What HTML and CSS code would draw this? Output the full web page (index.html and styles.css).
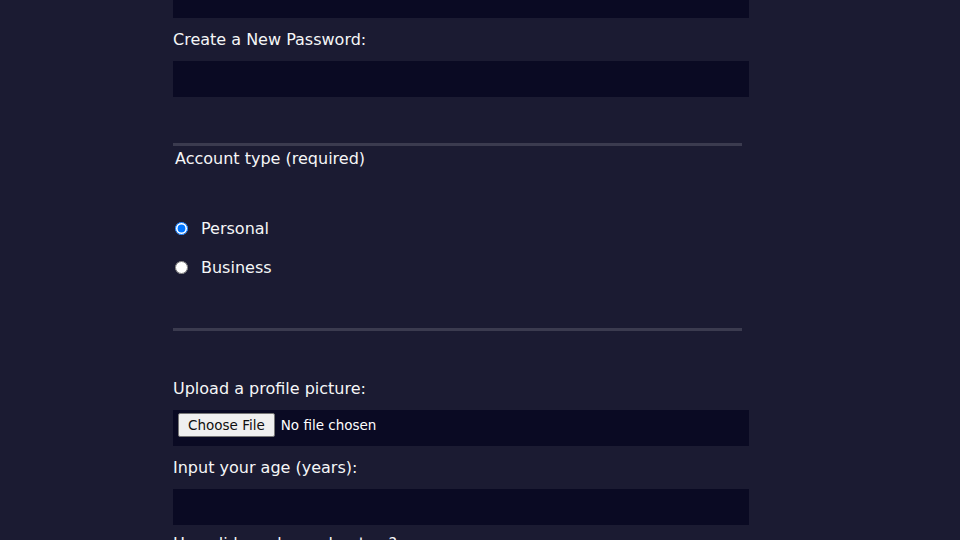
FILE: index.html
```html
<!DOCTYPE html>
<html lang="en">
<head>
<meta charset="utf-8">
<title>Registration Form</title>
<link rel="stylesheet" href="styles.css">
</head>
<body>
<form class="form" action="#">
  <fieldset class="group group-account">
    <label class="field"><span class="field-label">Enter Your Email:</span><input class="text-input" type="email" name="email"></label>
    <label class="field"><span class="field-label">Create a New Password:</span><input class="text-input" type="password" name="password"></label>
  </fieldset>
  <fieldset class="group group-type">
    <legend class="group-legend">Account type (required)</legend>
    <div class="choices">
      <label class="choice"><input class="choice-input" type="radio" name="account-type" value="personal" checked><span>Personal</span></label>
      <label class="choice"><input class="choice-input" type="radio" name="account-type" value="business"><span>Business</span></label>
    </div>
  </fieldset>
  <fieldset class="group group-profile">
    <label class="field"><span class="field-label">Upload a profile picture:</span><input class="file-input" type="file" name="file"></label>
    <label class="field"><span class="field-label">Input your age (years):</span><input class="text-input" type="number" name="age" min="13" max="120"></label>
    <label class="field field-referrer"><span class="field-label">How did you hear about us?</span><select class="text-input select-input" name="referrer"><option value="">(select one)</option><option value="1">freeCodeCamp News</option><option value="2">freeCodeCamp YouTube Channel</option><option value="3">freeCodeCamp Forum</option><option value="4">Other</option></select></label>
  </fieldset>
</form>
</body>
</html>
```

FILE: styles.css
```css
html {
  background: #1b1b32;
}

body {
  margin: 0;
  background: #1b1b32;
  color: #f5f6f7;
  font-family: "DejaVu Sans", Verdana, sans-serif;
  font-size: 16px;
  line-height: 19px;
}

.form {
  width: 569px;
  margin: -49px 0 0 173px;
  padding-bottom: 32px;
}

.group {
  display: flex;
  flex-direction: column;
  gap: 12px;
  margin: 0;
  min-inline-size: 0;
  border: 0;
  border-bottom: 3px solid #3b3b4f;
}

.group-account {
  padding: 0 0 46px;
}

.group-type {
  padding: 50px 0 51px;
}

.group-profile {
  padding: 48px 0 32px;
  border-bottom: 0;
}

.group-legend {
  padding: 3px 2px 0;
  line-height: 19px;
}

.field {
  display: flex;
  flex-direction: column;
  gap: 12px;
}

.field-referrer {
  margin-top: -3px;
}

.field-label {
  display: block;
  line-height: 19px;
}

.text-input {
  display: block;
  box-sizing: content-box;
  width: 100%;
  height: 32px;
  margin: 0;
  padding: 1px 3px 1px 2px;
  border: 1px solid #0a0a23;
  border-radius: 0;
  background: #0a0a23;
  color: #ffffff;
  font: 16px "DejaVu Sans", sans-serif;
  outline: none;
}

.select-input {
  height: 34px;
}

.file-input {
  display: flex;
  align-items: center;
  box-sizing: content-box;
  width: 100%;
  height: 32px;
  margin: 0;
  padding: 1px 3px 1px 2px;
  border: 1px solid #0a0a23;
  background: #0a0a23;
  color: #ffffff;
  font: 13.5px "DejaVu Sans", sans-serif;
  line-height: 16px;
}

.file-input::file-selector-button {
  box-sizing: border-box;
  height: 24px;
  margin: 1px 6px 0 2px;
  padding: 1px 9px;
  border: 1px solid #767676;
  border-radius: 2px;
  background: #efefef;
  color: #101010;
  font: inherit;
  line-height: 20px;
}

.choices {
  display: flex;
  flex-direction: column;
  gap: 19px;
}

.choice {
  display: flex;
  align-items: center;
  gap: 13px;
  height: 20px;
}

.choice-input {
  width: 13px;
  height: 13px;
  margin: 0 0 0 2px;
}
```
